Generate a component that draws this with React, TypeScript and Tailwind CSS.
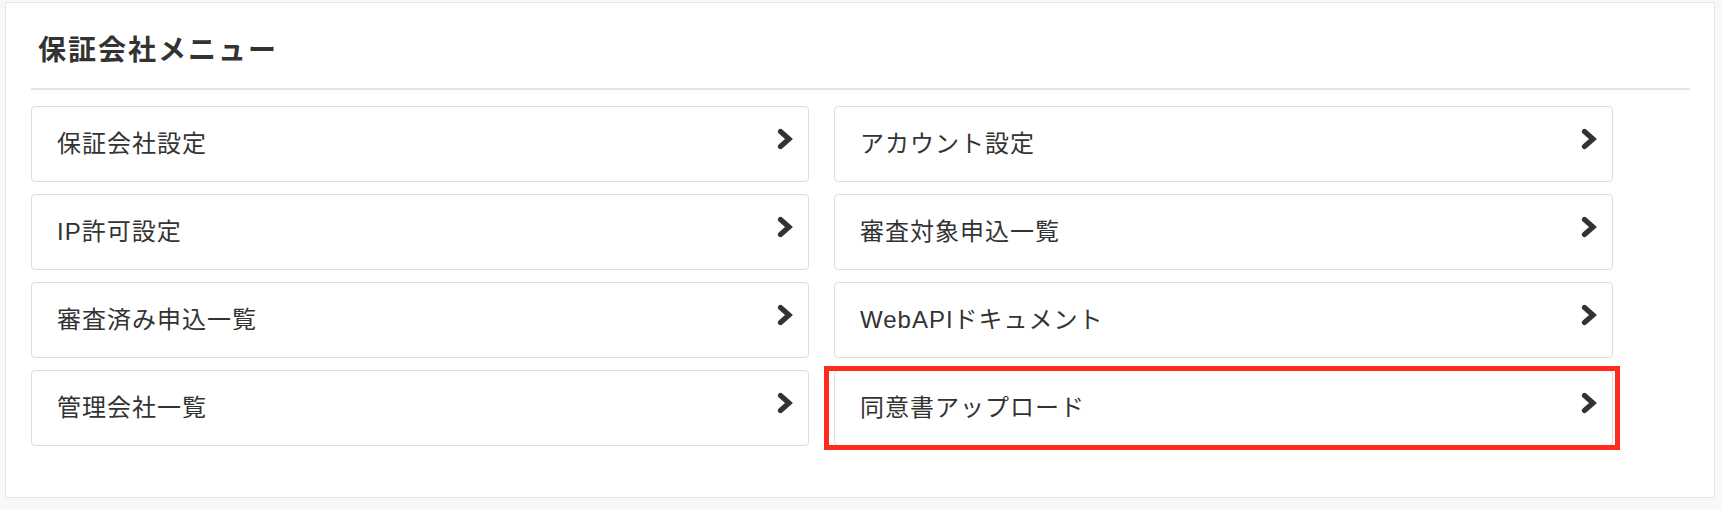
import React from 'react';

const items = [
  { label: '保証会社設定' },
  { label: 'アカウント設定' },
  { label: 'IP許可設定' },
  { label: '審査対象申込一覧' },
  { label: '審査済み申込一覧' },
  { label: 'WebAPIドキュメント' },
  { label: '管理会社一覧' },
  { label: '同意書アップロード', highlight: true },
];

const Chevron: React.FC = () => (
  <svg viewBox="0 0 16 22" className="w-[16px] h-[22px] shrink-0" aria-hidden="true">
    <polyline
      points="3.5,3.5 12,11 3.5,18.5"
      fill="none"
      stroke="#333333"
      strokeWidth="5.2"
      strokeLinecap="round"
      strokeLinejoin="miter"
    />
  </svg>
);

const App: React.FC = () => {
  return (
    <div
      className="w-[1722px] h-[510px] bg-[#f7f8fa] pt-[2px] pl-[5px] text-[#333333]"
      style={{ fontFamily: '"Liberation Sans", "Noto Sans CJK JP", sans-serif' }}
    >
      <div className="w-[1710px] h-[496px] bg-white border border-[#e4e6ec] pl-[25px] pt-[28px]">
        <div className="w-[1659px]">
          <h1 className="pl-[7px] text-[28px] leading-[40px] font-semibold tracking-[2px] text-[#333333]">
            保証会社メニュー
          </h1>
          <div className="mt-[17px] h-[2px] bg-[#e2e5ee]" />

          <div className="mt-[16px] grid grid-cols-[778px_779px] gap-x-[25px] gap-y-[12px]">
            {items.map((item) => (
              <div
                key={item.label}
                className="relative h-[76px] rounded-[4px] border border-[#dddddd] bg-white flex items-center justify-between pl-[25px] pr-[15px]"
              >
                <span className="text-[24px] leading-[32px] tracking-[1px]">{item.label}</span>
                <span className="-mt-[10px]">
                  <Chevron />
                </span>
                {item.highlight && (
                  <div className="absolute -left-[11px] -top-[5px] -right-[8px] -bottom-[5px] border-[5px] border-[#ff2b1c] pointer-events-none" />
                )}
              </div>
            ))}
          </div>
        </div>
      </div>
    </div>
  );
};

export default App;
